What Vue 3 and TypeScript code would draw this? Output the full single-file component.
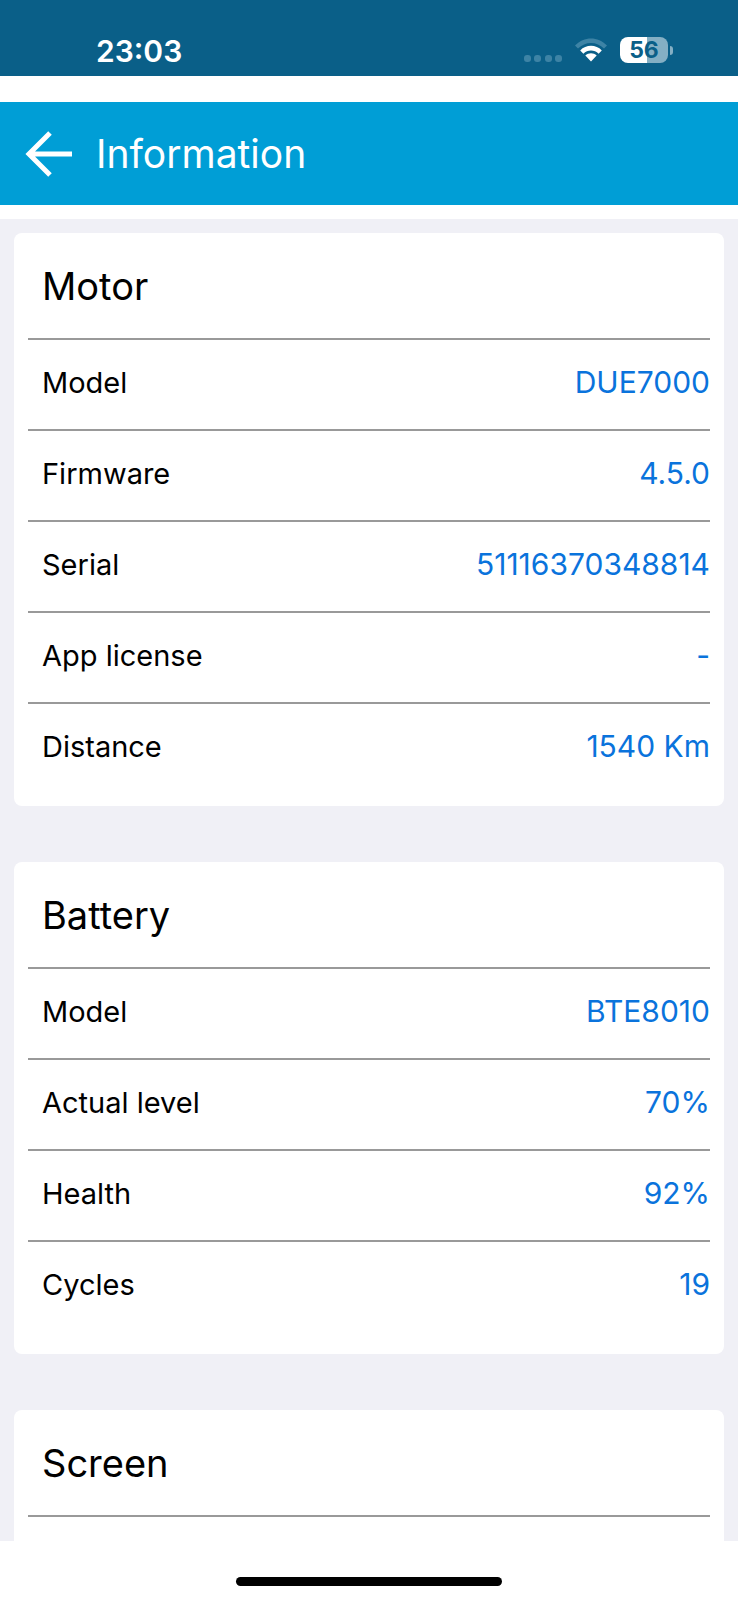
<script setup lang="ts">
interface Entry {
  label: string
  value: string
}

interface Section {
  id: string
  title: string
  entries: Entry[]
}

const sections: Section[] = [
  {
    id: 'motor',
    title: 'Motor',
    entries: [
      { label: 'Model', value: 'DUE7000' },
      { label: 'Firmware', value: '4.5.0' },
      { label: 'Serial', value: '51116370348814' },
      { label: 'App license', value: '-' },
      { label: 'Distance', value: '1540 Km' },
    ],
  },
  {
    id: 'battery',
    title: 'Battery',
    entries: [
      { label: 'Model', value: 'BTE8010' },
      { label: 'Actual level', value: '70%' },
      { label: 'Health', value: '92%' },
      { label: 'Cycles', value: '19' },
    ],
  },
  { id: 'screen', title: 'Screen', entries: [] },
]
</script>

<template>
  <div class="app">
    <div class="status">
      <time class="clock">23:03</time>
      <div class="indicators">
        <svg class="signal" width="38" height="8" viewBox="0 0 38 8" aria-hidden="true">
          <rect x="0" y="1" width="7" height="7" rx="3" />
          <rect x="10" y="1" width="7" height="7" rx="3" />
          <rect x="21" y="1" width="7" height="7" rx="3" />
          <rect x="31" y="1" width="7" height="7" rx="3" />
        </svg>
        <svg class="wifi" width="34" height="26" viewBox="0 0 34 26" aria-hidden="true">
          <path class="faint" d="M1 8.5C10 -1 24 -1 33 8.500L30 11.500C23 4 11 4 4 11.500Z" />
          <path d="M6.200 13.500C12 7.300 22 7.300 27.800 13.500L24.600 16.700C20.500 12.400 13.500 12.400 9.400 16.700Z" />
          <path d="M11.300 18.500C14.500 15.600 19.500 15.600 22.700 18.500L17 24.500Z" />
        </svg>
        <div class="power">
          <span class="charge">56</span>
          <span class="cap"></span>
        </div>
      </div>
    </div>

    <header class="bar">
      <button class="back" type="button" aria-label="Back">
        <svg width="48" height="48" viewBox="0 0 48 48" aria-hidden="true">
          <path d="M26 3L5 24L26 45M5 24H48" />
        </svg>
      </button>
      <h1 class="heading">Information</h1>
    </header>

    <main class="content">
      <section
        v-for="section in sections"
        :key="section.id"
        class="card"
        :aria-labelledby="section.id"
      >
        <h2 :id="section.id" class="title">{{ section.title }}</h2>
        <dl class="list">
          <div v-for="entry in section.entries" :key="entry.label" class="row">
            <dt>{{ entry.label }}</dt>
            <dd>{{ entry.value }}</dd>
          </div>
        </dl>
      </section>
    </main>

    <footer class="footer">
      <div class="home"></div>
    </footer>
  </div>
</template>

<style>
body {
  margin: 0;
  background: #fff;
}
</style>

<style scoped>
.app {
  display: flex;
  flex-direction: column;
  height: 100vh;
  background: #fff;
  color: #000;
  font-family: Inter, "Liberation Sans", sans-serif;
}

.status {
  display: flex;
  flex: none;
  justify-content: space-between;
  box-sizing: border-box;
  height: 76px;
  padding: 32px 65px 0 96px;
  background: #0a5f88;
  color: #fff;
}

.clock {
  font-size: 30px;
  font-weight: 600;
  line-height: 38px;
}

.indicators {
  display: flex;
  align-items: flex-start;
  padding-top: 5px;
}

.signal {
  margin: 17px 12px 0 0;
  fill: #3d83a5;
}

.wifi {
  margin-right: 12px;
  fill: #fff;
}

.wifi .faint {
  fill: #3d83a5;
}

.power {
  display: flex;
  align-items: center;
  gap: 2px;
}

.charge {
  width: 48px;
  border-radius: 8px;
  background: linear-gradient(90deg, #fff 56%, #84afc4 56%);
  color: #0a5f88;
  font-size: 23px;
  font-weight: 700;
  line-height: 26px;
  text-align: center;
}

.cap {
  width: 3px;
  height: 9px;
  border-radius: 0 4px 4px 0;
  background: #84afc4;
}

.bar {
  display: flex;
  flex: none;
  align-items: center;
  gap: 24px;
  box-sizing: border-box;
  height: 103px;
  margin: 26px 0 14px;
  padding: 1px 24px 0;
  background: #009ed6;
  color: #fff;
}

.back {
  display: flex;
  padding: 0;
  border: 0;
  background: none;
  cursor: pointer;
}

.back path {
  fill: none;
  stroke: #fff;
  stroke-width: 5;
}

.heading {
  margin: 0;
  font-size: 39px;
  font-weight: 400;
  line-height: 48px;
}

.content {
  flex: 1;
  min-height: 0;
  overflow: hidden;
  padding: 14px 14px 0;
  background: #f0f0f6;
}

.card {
  margin-bottom: 56px;
  padding: 0 14px 13px;
  border-radius: 8px;
  background: #fff;
}

.card:nth-child(n + 2) {
  padding-bottom: 23px;
}

.title {
  margin: 0;
  padding: 2px 14px 0;
  border-bottom: 2px solid #999;
  font-size: 38px;
  font-weight: 400;
  line-height: 103px;
}

.list {
  min-height: 89px;
  margin: 0;
}

.row {
  display: flex;
  align-items: center;
  justify-content: space-between;
  padding: 0 0 4px 14px;
  font-size: 29px;
  line-height: 85px;
}

.row + .row {
  border-top: 2px solid #999;
}

.row dd {
  margin: 0;
  color: #0a73dc;
  font-size: 30px;
}

.footer {
  display: flex;
  flex: none;
  align-items: center;
  justify-content: center;
  box-sizing: border-box;
  height: 59px;
  padding-top: 22px;
}

.home {
  width: 36%;
  height: 9px;
  border-radius: 5px;
  background: #000;
}
</style>
